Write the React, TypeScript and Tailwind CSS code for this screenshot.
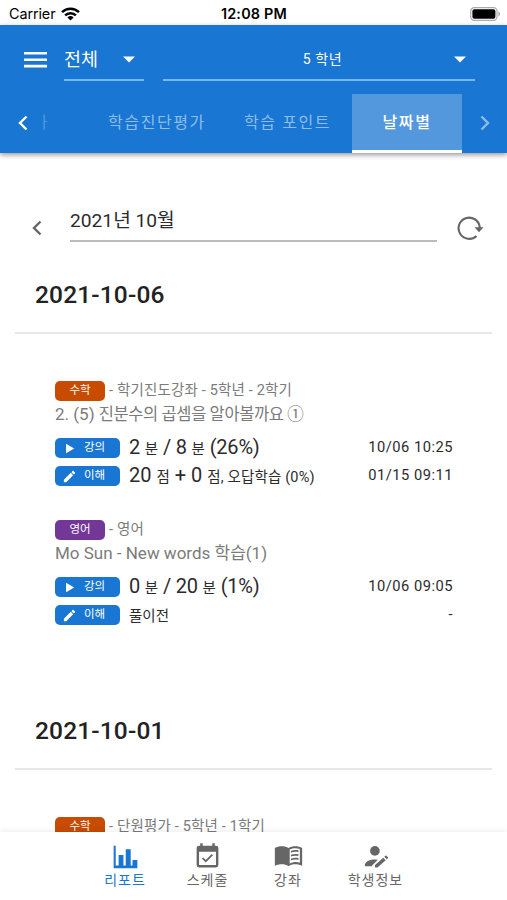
import type { ReactNode } from 'react'

interface Lesson {
  subject: string
  color: string
  course: string
  title: ReactNode
  lecture: ReactNode
  lectureAt: string
  quiz: ReactNode
  quizAt: string
}

const Small = ({ children }: { children: ReactNode }) => <span className="text-[14.5px] tracking-normal">{children}</span>

const lessons: Lesson[] = [
  {
    subject: '수학',
    color: 'bg-[#c74b00]',
    course: '- 학기진도강좌 - 5학년 - 2학기',
    title: <>2. (5) <span className="text-[16.5px] tracking-[-0.4px]">진분수의 곱셈을 알아볼까요 ①</span></>,
    lecture: <>2 <Small>분</Small> / 8 <Small>분</Small> (26%)</>,
    lectureAt: '10/06 10:25',
    quiz: <>20 <Small>점</Small> + 0 <Small><span className="tracking-[0.15px]">점, 오답학습 (0%)</span></Small></>,
    quizAt: '01/15 09:11',
  },
  {
    subject: '영어',
    color: 'bg-[#723797]',
    course: '- 영어',
    title: 'Mo Sun - New words 학습(1)',
    lecture: <>0 <Small>분</Small> / 20 <Small>분</Small> (1%)</>,
    lectureAt: '10/06 09:05',
    quiz: <Small>풀이전</Small>,
    quizAt: '-',
  },
]

function Caret() {
  return <svg width="12" height="7" viewBox="0 0 12 7" fill="white"><path d="M0 .5h12L6 6.5z" /></svg>
}

function Chevron({ right = false, className }: { right?: boolean; className?: string }) {
  return (
    <svg className={className} width="10" height="16" viewBox="0 0 10 16" fill="none" stroke="currentColor" strokeWidth="2.4">
      <path d={right ? 'M1.5 1.5 8 8l-6.5 6.5' : 'M8.5 1.5 2 8l6.5 6.5'} />
    </svg>
  )
}

function StatusBar() {
  return (
    <div className="grid h-[25px] shrink-0 grid-cols-3 items-center bg-white pt-[3px] pl-[9px] pr-[6px] font-['Inter',sans-serif] text-black">
      <div className="flex items-center gap-[6px] text-[14.4px] tracking-[-0.1px]">
        Carrier
        <svg width="19" height="14" viewBox="0 0 19 14" fill="none" stroke="black" strokeWidth="2.5">
          <path d="M1 5.1a12.2 12.2 0 0 1 17 0M4.1 8.3a7.8 7.8 0 0 1 10.8 0" />
          <path d="M6.4 10.5a4.5 4.5 0 0 1 6.2 0L9.5 13.6z" fill="black" stroke="none" />
        </svg>
      </div>
      <div className="pr-[2px] text-center text-[14.4px] font-semibold tracking-[0.2px] whitespace-nowrap">12:08 PM</div>
      <div className="flex justify-end">
        <svg width="31" height="14" viewBox="0 0 31 14">
          <rect x=".7" y=".7" width="26.3" height="12.6" rx="3.6" fill="white" stroke="#aaa" strokeWidth="1.2" />
          <rect x="2.4" y="2.2" width="23" height="9.6" rx="2" fill="black" />
          <path d="M28.4 4.6c2.2.7 2.2 4.1 0 4.8z" fill="#aaa" />
        </svg>
      </div>
    </div>
  )
}

function Header() {
  return (
    <header className="z-10 flex h-[128px] shrink-0 flex-col bg-[#1976d2] text-white shadow-[0_2px_5px_rgba(0,0,0,0.4)]">
      <div className="flex h-[56px] pt-[13px] pl-[24px]">
        <svg className="mt-[14px] shrink-0" width="23" height="16" viewBox="0 0 23 16" fill="white">
          <path d="M0 0h23v2.6H0zM0 6.4h23V9H0zM0 12.8h23v2.6H0z" />
        </svg>
        <div className="ml-[17px] flex h-[43px] w-[80px] items-center justify-between border-b-2 border-[#74b9fa] pt-[2px] pr-[9px]">
          <span className="text-[18.5px] leading-[40px]">전체</span>
          <Caret />
        </div>
        <div className="ml-[19px] flex h-[43px] w-[312px] items-center border-b-2 border-[#74b9fa] pt-[2px] pr-[9px]">
          <span className="flex-1 pl-[28px] text-center text-[14px] tracking-[0.6px]">5 학년</span>
          <Caret />
        </div>
      </div>
      <nav className="mt-[13px] flex h-[59px] items-center text-[16px] leading-[56px] tracking-[1.6px] whitespace-nowrap text-[#8fbdea]">
        <Chevron className="-mt-[1px] ml-[18px] text-white" />
        {/* tab scrolled out to the left, only its last stroke shows */}
        <div className="-mt-[2px] ml-[15px] flex w-[5px] justify-end overflow-hidden opacity-50"><span className="-mr-[1px]">가</span></div>
        <span className="-mt-[2px] ml-[60px]">학습진단평가</span>
        <span className="-mt-[2px] ml-[38px]">학습 포인트</span>
        <div className="ml-auto h-[59px] w-[110px] border-b-[3px] border-white bg-[#5397dd] text-center leading-[58px] font-medium text-white">날짜별</div>
        <Chevron right className="-mt-[1px] mr-[17px] ml-[18px]" />
      </nav>
    </header>
  )
}

function Badge({ icon, label }: { icon: 'play' | 'pencil'; label: string }) {
  return (
    <span className="flex h-[20px] w-[65px] shrink-0 items-center rounded-[5px] bg-[#1976d2] pl-[7px] text-[11.5px] text-white">
      <svg className="mr-[7px]" width="15" height="15" viewBox="0 0 24 24" fill="currentColor">
        {icon === 'play'
          ? <path d="M6.5 4.5v15l13-7.5z" />
          : <path d="M20.71 7.04c.39-.39.39-1.04 0-1.41l-2.34-2.34c-.37-.39-1.02-.39-1.41 0l-1.84 1.83 3.75 3.75M3 17.25V21h3.75L17.81 9.93l-3.75-3.75z" />}
      </svg>
      {label}
    </span>
  )
}

function Tag({ subject, color, course }: { subject: string; color: string; course: string }) {
  return (
    <div className="flex h-[20px] items-center text-[14.5px] text-[#7b7b7b]">
      <span className={`mr-[4px] h-[20px] w-[50px] rounded-[5px] text-center text-[11.5px] leading-[19px] text-white ${color}`}>{subject}</span>
      <span className="leading-[20px] tracking-[0.17px] whitespace-nowrap">{course}</span>
    </div>
  )
}

function LessonItem({ lesson }: { lesson: Lesson }) {
  return (
    <div className="mb-[34px] h-[105px] pr-[54px] pl-[55px] text-[#2b2b2b]">
      <Tag subject={lesson.subject} color={lesson.color} course={lesson.course} />
      <div className="h-[37px] text-[17px] leading-[26px] whitespace-nowrap text-[#7b7b7b]">{lesson.title}</div>
      <div className="flex h-[28px] justify-between">
        <div className="flex"><Badge icon="play" label="강의" /><span className="ml-[9px] text-[20px] leading-[18px] tracking-[-0.2px] whitespace-nowrap">{lesson.lecture}</span></div>
        <span className="text-[14.7px] leading-[18px] tracking-[0.5px]">{lesson.lectureAt}</span>
      </div>
      <div className="flex h-[20px] justify-between">
        <div className="flex"><Badge icon="pencil" label="이해" /><span className="ml-[9px] text-[20px] leading-[18px] whitespace-nowrap">{lesson.quiz}</span></div>
        <span className="text-[14.7px] leading-[18px] tracking-[0.5px]">{lesson.quizAt}</span>
      </div>
    </div>
  )
}

const DateTitle = ({ children }: { children: ReactNode }) => (
  <h2 className="mx-[15px] h-[59px] border-b-2 border-[#e7e7e7] pl-[20px] text-[24.5px] leading-[39px] font-medium tracking-[0.15px] text-[#222]">{children}</h2>
)

function NavItem({ label, active, className, children }: { label: string; active?: boolean; className: string; children: ReactNode }) {
  return (
    <div className={`flex flex-col items-center pt-[10px] ${active ? 'text-[#1976d2]' : 'text-[#666]'} ${className}`}>
      <svg width="29" height="29" viewBox="0 0 24 24" fill="currentColor">{children}</svg>
      <span className="text-[14px] leading-[18px] tracking-[1px] whitespace-nowrap">{label}</span>
    </div>
  )
}

export default function App() {
  return (
    <div className="flex h-[900px] w-[507px] flex-col overflow-hidden bg-white font-['Roboto','Noto_Sans_CJK_KR',sans-serif]">
      <StatusBar />
      <Header />
      <main className="min-h-0 flex-1 overflow-hidden pt-[49px]">
        {/* month picker */}
        <div className="flex h-[40px] pl-[32px] text-[#666]">
          <Chevron className="mt-[18px] shrink-0" />
          <div className="ml-[28px] w-[367px] border-b-2 border-[#bcbcbc] text-[19.2px] leading-[37px] text-[#2b2b2b]">2021년 10월</div>
          <svg className="mt-[13px] ml-[20px]" width="27" height="26" viewBox="0 0 27 26" fill="none" stroke="currentColor" strokeWidth="2.1">
            <path d="M19.5 20.9A10.6 10.6 0 1 1 22.7 12v2" />
            <path d="M17.5 12.2h9l-4.5 5z" fill="currentColor" stroke="none" />
          </svg>
        </div>
        <section className="mt-[33px]">
          <DateTitle>2021-10-06</DateTitle>
          <div className="h-[388px] pt-[47px]">
            {lessons.map(lesson => <LessonItem key={lesson.subject} lesson={lesson} />)}
          </div>
        </section>
        <section className="-mt-[11px]">
          <DateTitle>2021-10-01</DateTitle>
          <div className="pt-[47px] pl-[55px]">
            <Tag subject="수학" color="bg-[#c74b00]" course="- 단원평가 - 5학년 - 1학기" />
          </div>
        </section>
      </main>
      <nav className="z-10 flex h-[68px] shrink-0 bg-white pl-[84px] shadow-[0_-1px_6px_rgba(0,0,0,0.08)]">
        <NavItem label="리포트" active className="w-[82px]">
          <path d="M2.2 3h1.7v16.4h2.4v-8.6h4v8.6h1.9V6.1h4.1v13.3h1.5v-4.5h4v6.9H2.2z" />
        </NavItem>
        <NavItem label="스케줄" className="w-[83px]">
          <path fillRule="evenodd" d="M19 3h-1V1h-2v2H8V1H6v2H5a2 2 0 0 0-2 2v14a2 2 0 0 0 2 2h14a2 2 0 0 0 2-2V5a2 2 0 0 0-2-2m0 16H5V8h14zM16.53 11.06 15.47 10l-4.88 4.88-2.12-2.12-1.06 1.06L10.59 17z" />
        </NavItem>
        <NavItem label="강좌" className="w-[78px]">
          <path fillRule="evenodd" d="M12 5C10.5 4 8.5 3.5 6.5 3.5S2.2 3.9.7 5v14.8c1.6-.9 3.7-1.3 5.8-1.3s4 .5 5.5 1.5c1.5-1 3.5-1.5 5.5-1.5s4.2.4 5.8 1.3V5c-1.5-1-3.8-1.5-5.8-1.5S13.5 4 12 5m9.4 12.1c-2.6-.8-5.7-.6-8.4.8V6.2c2.8-1.5 6-1.3 8.4-.5z" />
          <path d="M14 8.8c1.9-.8 4.2-.8 6.2-.4V6.9c-2.1-.4-4.4-.2-6.2.5zm0 3.2c1.9-.8 4.2-.8 6.2-.4v-1.5c-2.1-.4-4.4-.2-6.2.5zm0 3.2c1.9-.8 4.2-.8 6.2-.4v-1.5c-2.1-.4-4.4-.2-6.2.5z" />
        </NavItem>
        <NavItem label="학생정보" className="w-[97px]">
          <circle cx="11.5" cy="7.4" r="4" />
          <path d="M3.2 20v-.8c0-2.9 3.6-4.8 8-4.8l2.8.2-5.4 5.4zM22.3 13.35l-1 1-2.05-2.05 1-1c.2-.2.56-.2.77 0l1.28 1.28c.2.2.2.56 0 .77M11.6 19l6.8-6 2.05 2.05L13.65 21H11.6z" />
        </NavItem>
      </nav>
    </div>
  )
}
